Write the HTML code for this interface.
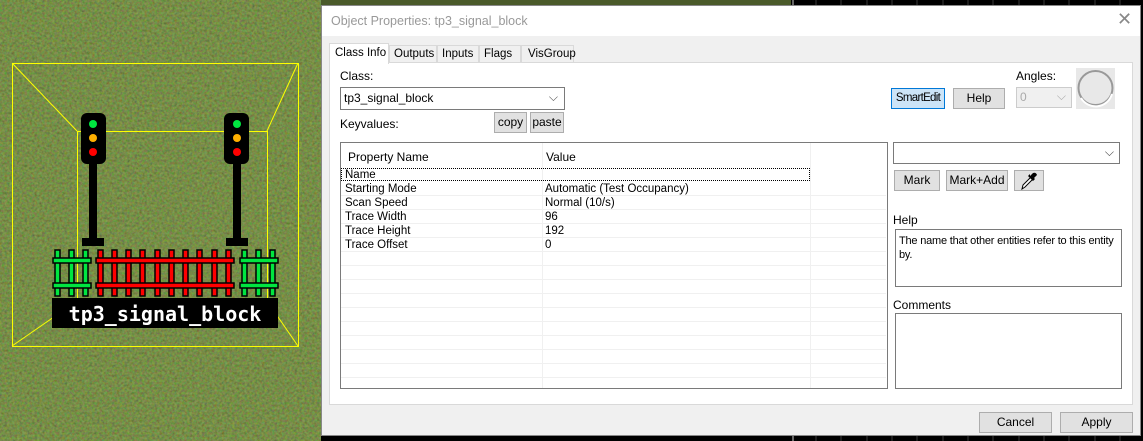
<!DOCTYPE html>
<html><head><style>
*{margin:0;padding:0;box-sizing:border-box}
body{width:1143px;height:441px;overflow:hidden;position:relative;font-family:"Liberation Sans",sans-serif;font-size:12px;color:#000;background:#000}
.a{position:absolute;white-space:nowrap}
.btn{position:absolute;background:#e1e1e1;border:1px solid #adadad;text-align:center;font-size:12px;line-height:18px}
.box{position:absolute;background:#fff;border:1px solid #7a7a7a}
.row{position:absolute;left:0;width:545px;height:14px;border-bottom:1px solid #f0f0f0;font-size:11.5px;line-height:14px}
.row span{position:absolute}
.tab{position:absolute;top:39px;height:18px;border:1px solid #d9d9d9;background:#f0f0f0;font-size:11.5px;padding:2px 0 0 4px}
</style></head><body>
<svg class="a" style="left:0;top:0" width="321" height="441">
<defs><filter id="n" filterUnits="userSpaceOnUse" x="0" y="0" width="321" height="441"><feTurbulence type="fractalNoise" baseFrequency="0.4" numOctaves="3" seed="4" result="t"/><feColorMatrix in="t" type="matrix" values="0.45 0 0 0 0.05  0 0.6 0 0 0.1  0 0 0.2 0 0.0  0 0 0 0 1"/></filter></defs>
<rect width="321" height="441" fill="#3e4c20"/>
<rect width="321" height="441" filter="url(#n)" opacity="0.7"/>
<g stroke="#ffff00" fill="none" stroke-width="1">
<rect x="12.5" y="63.5" width="286" height="283"/>
<rect x="77.5" y="131.5" width="190" height="170"/>
<line x1="12" y1="63" x2="77" y2="131"/><line x1="298" y1="63" x2="267" y2="131"/>
<line x1="12" y1="346" x2="77" y2="301"/><line x1="298" y1="346" x2="267" y2="301"/>
</g>
<g>
<rect x="81" y="113" width="25" height="51" rx="6" fill="#000"/><circle cx="93" cy="124" r="4" fill="#00e640"/><circle cx="93" cy="138" r="4" fill="#ffb000"/><circle cx="93" cy="152" r="4" fill="#ff0000"/>
<rect x="89" y="163" width="8" height="76" fill="#000"/><rect x="82" y="238" width="22" height="8" fill="#000"/>
<rect x="224" y="113" width="25" height="51" rx="6" fill="#000"/><circle cx="237" cy="124" r="4" fill="#00e640"/><circle cx="237" cy="138" r="4" fill="#ffb000"/><circle cx="237" cy="152" r="4" fill="#ff0000"/>
<rect x="233" y="163" width="8" height="76" fill="#000"/><rect x="226" y="238" width="22" height="8" fill="#000"/>
<g fill="#00e640" stroke="#000" stroke-width="1.5"><rect x="55" y="250" width="5" height="46"/><rect x="69" y="250" width="5" height="46"/><rect x="83" y="250" width="5" height="46"/><rect x="53" y="258" width="38" height="5"/><rect x="53" y="283" width="38" height="5"/>
<rect x="242" y="250" width="5" height="46"/><rect x="256" y="250" width="5" height="46"/><rect x="270" y="250" width="5" height="46"/><rect x="240" y="258" width="38" height="5"/><rect x="240" y="283" width="38" height="5"/></g>
<g fill="#f00" stroke="#000" stroke-width="1.5"><rect x="98" y="250" width="5" height="46"/><rect x="112" y="250" width="5" height="46"/><rect x="126" y="250" width="5" height="46"/><rect x="140" y="250" width="5" height="46"/><rect x="155" y="250" width="5" height="46"/><rect x="169" y="250" width="5" height="46"/><rect x="183" y="250" width="5" height="46"/><rect x="197" y="250" width="5" height="46"/><rect x="212" y="250" width="5" height="46"/><rect x="226" y="250" width="5" height="46"/><rect x="96" y="258" width="138" height="5"/><rect x="96" y="283" width="138" height="5"/></g>
<rect x="52" y="298" width="226" height="30" fill="#000"/>
<text x="165" y="321" fill="#fff" font-family="DejaVu Sans Mono,monospace" font-weight="bold" font-size="20" text-anchor="middle">tp3_signal_block</text>
</g>
</svg>
<div class="a" style="left:321px;top:0;width:470px;height:5px;background:#4a5a2a"></div>
<svg class="a" style="left:791px;top:0" width="352" height="441"><g stroke="#3a3a3a"><line x1="2" y1="0" x2="2" y2="441" stroke="#ccc"/><line x1="25" y1="0" x2="25" y2="441"/><line x1="50" y1="0" x2="50" y2="441"/><line x1="76" y1="0" x2="76" y2="441"/><line x1="101" y1="0" x2="101" y2="441"/><line x1="126" y1="0" x2="126" y2="441"/><line x1="152" y1="0" x2="152" y2="441"/><line x1="177" y1="0" x2="177" y2="441"/><line x1="202" y1="0" x2="202" y2="441"/><line x1="228" y1="0" x2="228" y2="441"/><line x1="253" y1="0" x2="253" y2="441"/><line x1="278" y1="0" x2="278" y2="441"/><line x1="304" y1="0" x2="304" y2="441"/><line x1="329" y1="0" x2="329" y2="441"/></g></svg>
<div class="a" style="left:321px;top:5px;width:820px;height:431px;background:#f0f0f0;border:1px solid #888">
<div class="a" style="left:0;top:0;width:818px;height:30px;background:#fff"></div>
<div class="a" style="left:9px;top:8px;font-size:12.5px;color:#999">Object Properties: tp3_signal_block</div>
<div class="a" style="left:795px;top:3px;font-size:18px;color:#888">✕</div>
<div class="a" style="left:7px;top:56px;width:804px;height:343px;border:1px solid #d9d9d9;background:#fff"></div>
<div class="tab" style="left:67px;width:48px">Outputs</div>
<div class="tab" style="left:115px;width:42px">Inputs</div>
<div class="tab" style="left:157px;width:42px">Flags</div>
<div class="tab" style="left:199px;width:53px;padding-left:6px">VisGroup</div>
<div class="a" style="left:7px;top:37px;width:60px;height:21px;border:1px solid #d9d9d9;border-bottom:none;background:#fff;padding:3px 0 0 5px;font-size:11.5px">Class Info</div>
</div>
<div class="a" style="left:340px;top:69px">Class:</div>
<div class="box" style="left:340px;top:87px;width:225px;height:23px;padding:3px 0 0 3px">tp3_signal_block<span class="a" style="right:6px;top:2px;color:#555">⌵</span></div>
<div class="a" style="left:340px;top:117px">Keyvalues:</div>
<div class="btn" style="left:494px;top:112px;width:33px;height:21px">copy</div>
<div class="btn" style="left:530px;top:112px;width:34px;height:21px">paste</div>
<div class="box" style="left:340px;top:142px;width:548px;height:247px;overflow:hidden">
<div class="a" style="left:7px;top:7px">Property Name</div><div class="a" style="left:205px;top:7px">Value</div>
<div class="a" style="left:201px;top:0;height:245px;border-left:1px solid #f0f0f0"></div>
<div class="a" style="left:469px;top:0;height:245px;border-left:1px solid #f0f0f0"></div>
<div class="row" style="top:25px;width:469px;border:1px dotted #000;height:13px"><span style="left:3px;top:-1px">Name</span></div>
<div class="row" style="top:39px"><span style="left:4px">Starting Mode</span><span style="left:204px">Automatic (Test Occupancy)</span></div>
<div class="row" style="top:53px"><span style="left:4px">Scan Speed</span><span style="left:204px">Normal (10/s)</span></div>
<div class="row" style="top:67px"><span style="left:4px">Trace Width</span><span style="left:204px">96</span></div>
<div class="row" style="top:81px"><span style="left:4px">Trace Height</span><span style="left:204px">192</span></div>
<div class="row" style="top:95px"><span style="left:4px">Trace Offset</span><span style="left:204px">0</span></div>
<div class="row" style="top:109px"></div><div class="row" style="top:123px"></div><div class="row" style="top:137px"></div><div class="row" style="top:151px"></div><div class="row" style="top:165px"></div><div class="row" style="top:179px"></div><div class="row" style="top:193px"></div><div class="row" style="top:207px"></div><div class="row" style="top:221px"></div>
</div>
<div class="btn" style="left:891px;top:88px;width:54px;height:21px;background:#cce4f7;border-color:#0078d7;letter-spacing:-0.7px;font-size:11.5px">SmartEdit</div>
<div class="btn" style="left:953px;top:88px;width:52px;height:21px">Help</div>
<div class="a" style="left:1016px;top:69px">Angles:</div>
<div class="a" style="left:1016px;top:87px;width:56px;height:21px;border:1px solid #ccc;background:#f0f0f0;color:#aaa;padding:2px 0 0 3px">0<span class="a" style="right:5px;top:1px">⌵</span></div>
<svg class="a" style="left:1076px;top:68px" width="39" height="41"><rect width="39" height="41" fill="#e8e8e8"/><circle cx="19.5" cy="20" r="17" fill="none" stroke="#999" stroke-width="2"/><path d="M5 30 A17 17 0 0 0 36 26" stroke="#fff" stroke-width="2" fill="none"/></svg>
<div class="box" style="left:893px;top:142px;width:227px;height:22px"><span class="a" style="right:5px;top:2px;color:#444">⌵</span></div>
<div class="btn" style="left:894px;top:170px;width:46px;height:21px">Mark</div>
<div class="btn" style="left:946px;top:170px;width:62px;height:21px">Mark+Add</div>
<div class="btn" style="left:1014px;top:170px;width:30px;height:21px"><svg width="20" height="18" style="margin-top:1px"><path d="M3 17 L4 13 L12 5 L14 7 L6 15 Z" fill="#fff" stroke="#000"/><path d="M11 4 L14 1 Q17 0 18 3 L15 6 L16 7 L14 9 L9 4 L11 2 Z" fill="#000"/></svg></div>
<div class="a" style="left:893px;top:213px">Help</div>
<div class="box" style="left:895px;top:229px;width:227px;height:58px;padding:4px 3px;font-size:11px;line-height:14px;white-space:normal;letter-spacing:-0.2px">The name that other entities refer to this entity by.</div>
<div class="a" style="left:893px;top:298px">Comments</div>
<div class="box" style="left:895px;top:313px;width:227px;height:76px"></div>
<div class="btn" style="left:979px;top:412px;width:73px;height:21px">Cancel</div>
<div class="btn" style="left:1060px;top:412px;width:73px;height:21px">Apply</div>
</body></html>
